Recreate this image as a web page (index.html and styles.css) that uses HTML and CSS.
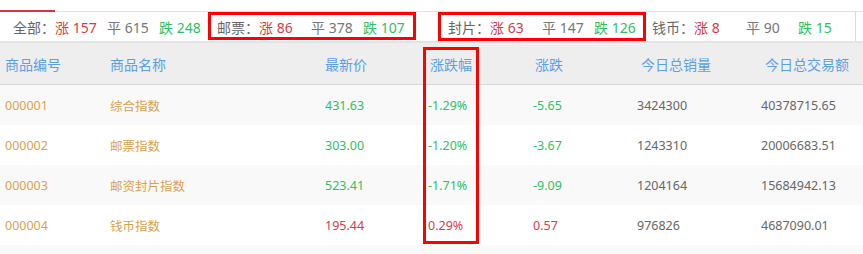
FILE: index.html
```html
<!DOCTYPE html>
<html lang="zh-CN">
<head>
<meta charset="utf-8">
<link rel="stylesheet" href="styles.css">
</head>
<body>
<div class="page">
  <div class="tabs"><div class="tab-active"></div></div>
  <div class="stats">
    <div class="group g1">
      <span class="label">全部：</span>
      <span class="item up">涨 157</span>
      <span class="item flat">平 615</span>
      <span class="item down">跌 248</span>
    </div>
    <div class="group g2">
      <span class="label">邮票：</span>
      <span class="item up">涨 86</span>
      <span class="item flat">平 378</span>
      <span class="item down">跌 107</span>
    </div>
    <div class="group g3">
      <span class="label">封片：</span>
      <span class="item up">涨 63</span>
      <span class="item flat">平 147</span>
      <span class="item down">跌 126</span>
    </div>
    <div class="group g4">
      <span class="label">钱币：</span>
      <span class="item up">涨 8</span>
      <span class="item flat">平 90</span>
      <span class="item down">跌 15</span>
    </div>
    <div class="edge"></div>
  </div>
  <div class="table">
    <div class="thead">
      <span>商品编号</span><span>商品名称</span><span>最新价</span><span>涨跌幅</span><span>涨跌</span><span>今日总销量</span><span>今日总交易额</span>
    </div>
    <div class="row odd">
      <span class="code">000001</span><span class="code">综合指数</span><span class="down">431.63</span><span class="down">-1.29%</span><span class="down">-5.65</span><span class="num">3424300</span><span class="num">40378715.65</span>
    </div>
    <div class="row">
      <span class="code">000002</span><span class="code">邮票指数</span><span class="down">303.00</span><span class="down">-1.20%</span><span class="down">-3.67</span><span class="num">1243310</span><span class="num">20006683.51</span>
    </div>
    <div class="row odd">
      <span class="code">000003</span><span class="code">邮资封片指数</span><span class="down">523.41</span><span class="down">-1.71%</span><span class="down">-9.09</span><span class="num">1204164</span><span class="num">15684942.13</span>
    </div>
    <div class="row">
      <span class="code">000004</span><span class="code">钱币指数</span><span class="up">195.44</span><span class="up">0.29%</span><span class="up">0.57</span><span class="num">976826</span><span class="num">4687090.01</span>
    </div>
    <div class="row odd"></div>
  </div>
  <div class="mark mark-1"></div>
  <div class="mark mark-2"></div>
  <div class="mark mark-3"></div>
</div>
</body>
</html>
```
FILE: styles.css
```css
html, body {
  margin: 0;
  padding: 0;
  background: #fff;
}
body {
  font-family: "Noto Sans", "Noto Sans CJK SC", sans-serif;
  color: #666;
  overflow: hidden;
}
.page {
  position: relative;
  width: 863px;
  height: 254px;
  overflow: hidden;
}
.tabs {
  height: 11px;
  border-bottom: 1px solid #e2e2e2;
  position: relative;
}
.tab-active {
  position: absolute;
  left: 0;
  bottom: -1px;
  width: 55px;
  height: 2px;
  background: #d9343f;
}
.stats {
  display: flex;
  align-items: center;
  height: 29px;
  padding-left: 13px;
  border-bottom: 2px solid #e4e4e4;
  font-size: 14px;
  position: relative;
}
.group {
  display: flex;
  align-items: center;
  white-space: nowrap;
}
.g1 { width: 204px; }
.g2 { width: 231px; }
.g3 { width: 204px; }
.label {
  width: 42px;
  color: #666;
}
.item {
  width: 52px;
}
.up { color: #db3a45; }
.down { color: #2fbf5f; }
.flat { color: #777; }
.edge {
  position: absolute;
  left: 855px;
  top: 0;
  width: 1px;
  height: 29px;
  background: #dcdcdc;
}
.table {
  font-size: 12.5px;
}
.thead {
  display: grid;
  grid-template-columns: 105px 215px 105px 105px 106px 124px 1fr;
  align-items: center;
  height: 41px;
  padding-left: 5px;
  background: #eeeeee;
  border-bottom: 1px solid #d8d8d8;
  color: #5b9fe6;
  font-size: 14px;
}
.row {
  display: grid;
  grid-template-columns: 105px 215px 103px 105px 104px 124px 1fr;
  align-items: center;
  height: 40px;
  padding-left: 5px;
  background: #fff;
}
.row.odd {
  background: #f9f9f9;
}
.code { color: #dba24e; }
.num { color: #666; }
.mark {
  position: absolute;
  border: 3px solid #ff0000;
  box-sizing: border-box;
}
.mark-1 { left: 208px; top: 12px; width: 208px; height: 28px; }
.mark-2 { left: 438px; top: 12px; width: 208px; height: 29px; }
.mark-3 { left: 423px; top: 47px; width: 56px; height: 197px; }
```
